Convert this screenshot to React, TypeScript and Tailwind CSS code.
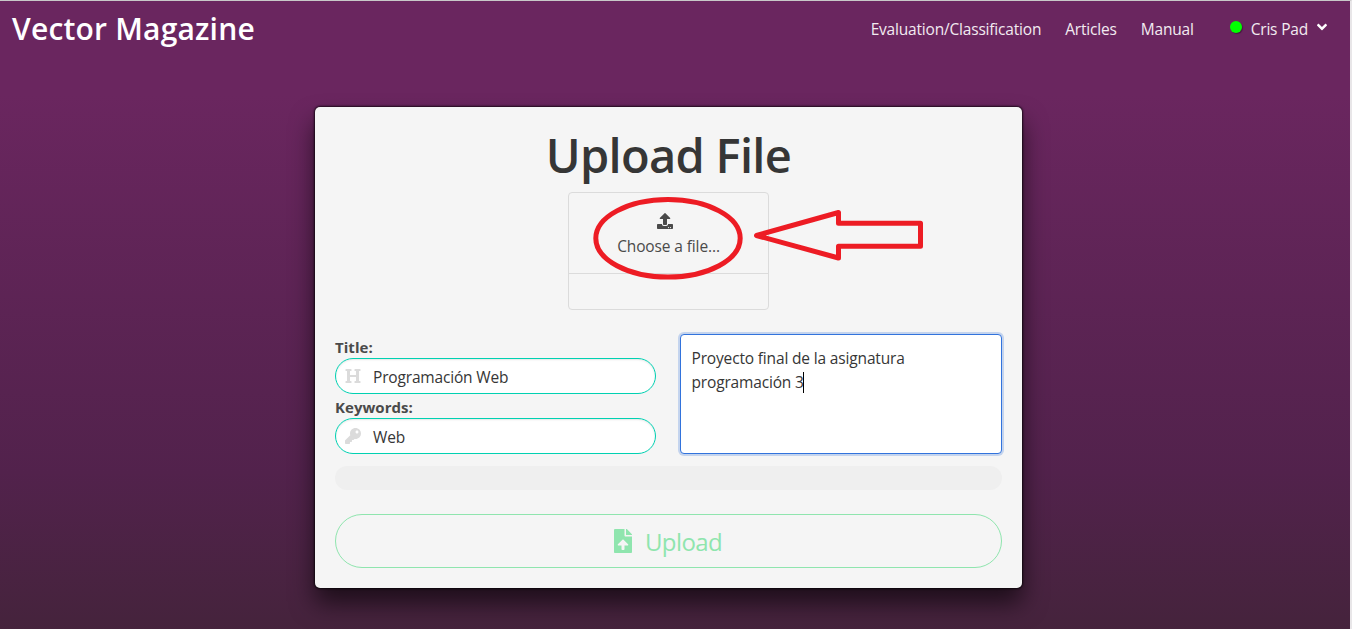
import type { ReactNode } from 'react';
import { FaAngleDown, FaFileUpload, FaHeading, FaKey, FaUpload } from 'react-icons/fa';

function Navbar() {
  return (
    <header className="flex h-[56px] items-center justify-between pl-3 pr-5 text-[#f2ebf1]">
      <h1 className="text-[30px] leading-[56px] font-semibold tracking-[0.2px] text-white">Vector Magazine</h1>
      <nav className="flex items-center gap-6 text-[15.5px] leading-6 tracking-[-0.19px]">
        <span>Evaluation/Classification</span>
        <span>Articles</span>
        <span>Manual</span>
        <span className="ml-3 flex items-center">
          <span className="mr-[9px] mb-1 size-3 rounded-full bg-[#00ff00] shadow-[1px_1px_1px_rgba(0,0,0,0.35)]" />
          <span>Cris Pad</span>
          <FaAngleDown className="mb-1 ml-1.5 size-4 text-white" />
        </span>
      </nav>
    </header>
  );
}

function Field({ label, value, icon }: { label: string; value: string; icon: ReactNode }) {
  return (
    <div>
      <label className="block h-6 pt-px text-[15px] leading-6 font-bold tracking-[0.04px] text-[#4a4a4a]">{label}</label>
      <div className="flex h-9 items-center rounded-full border border-[#00d1b2] bg-white pl-[9px] shadow-[inset_0_1px_2px_rgba(10,10,10,0.1)]">
        <span className="mr-3 text-[#dbdbdb]">{icon}</span>
        <span className="pt-0.5 text-[15.5px] leading-6 tracking-[-0.17px] text-[#363636]">{value}</span>
      </div>
    </div>
  );
}

function FilePicker() {
  return (
    <div className="mx-auto mt-[7px] h-[118px] w-[201px] rounded-[4px] border border-[#dbdbdb]">
      <div className="relative flex h-[81px] flex-col items-center border-b border-[#dbdbdb] pt-5 text-[#4a4a4a]">
        <FaUpload className="mr-2 size-4" />
        <span className="mt-[5px] text-[15.5px] leading-6 tracking-[-0.12px]">Choose a file...</span>
        <svg className="absolute top-[3px] left-[23px] h-[86px] w-[334px]" viewBox="0 0 334 86" fill="none" stroke="#ed1c24" strokeWidth="5">
          <ellipse cx="76" cy="42.300" rx="72.200" ry="38.800" />
          <path d="M164.500 39.500 246.500 16.500V27.300H328.500V50.300H246.500V62Z" strokeLinejoin="round" />
        </svg>
      </div>
    </div>
  );
}

export default function App() {
  return (
    <div className="h-[629px] w-[1352px] overflow-hidden border-t border-r-2 border-t-[#c8c8c8] border-r-[#e8e6e8] bg-linear-to-b from-[#6a265f] from-15% via-[#52224c] via-75% to-[#45233c] font-['Open_Sans','Noto_Sans',sans-serif]">
      <Navbar />
      <main className="mt-[50px] ml-[315px] h-[481px] w-[707px] rounded-[5px] bg-[#f5f5f5] px-5 pt-[18px] shadow-[0_0_2px_1px_rgba(0,0,0,0.7),0_15px_25px_rgba(0,0,0,0.6)]">
        <h2 className="text-center text-[47px] leading-[60px] font-semibold tracking-[-0.7px] text-[#363636]">Upload File</h2>
        <FilePicker />
        <div className="mt-6 grid grid-cols-[321px_322px] gap-6">
          <div>
            <Field label="Title:" value="Programación Web" icon={<FaHeading className="size-4" />} />
            <Field label="Keywords:" value="Web" icon={<FaKey className="size-4" />} />
          </div>
          <div className="h-[120px] rounded-[4px] border border-[#3273dc] bg-white px-[10.5px] pt-[11px] text-[15.5px] leading-6 tracking-[-0.16px] text-[#363636] shadow-[0_0_0_2px_rgba(50,115,220,0.25)]">
            <p>Proyecto final de la asignatura</p>
            <p className="flex items-center">
              programación 3<span className="-ml-px h-[21px] w-px bg-black" />
            </p>
          </div>
        </div>
        <div className="mt-3 h-6 rounded-full bg-[#efefef]" />
        <button className="mt-6 flex h-[54px] w-full items-center justify-center rounded-full border border-[#8fe5ae] pr-1 text-[24px] leading-9 tracking-[-0.6px] text-[#8fe5ae]">
          <FaFileUpload className="mr-[10px] size-6" />
          <span className="pt-0.5">Upload</span>
        </button>
      </main>
    </div>
  );
}
